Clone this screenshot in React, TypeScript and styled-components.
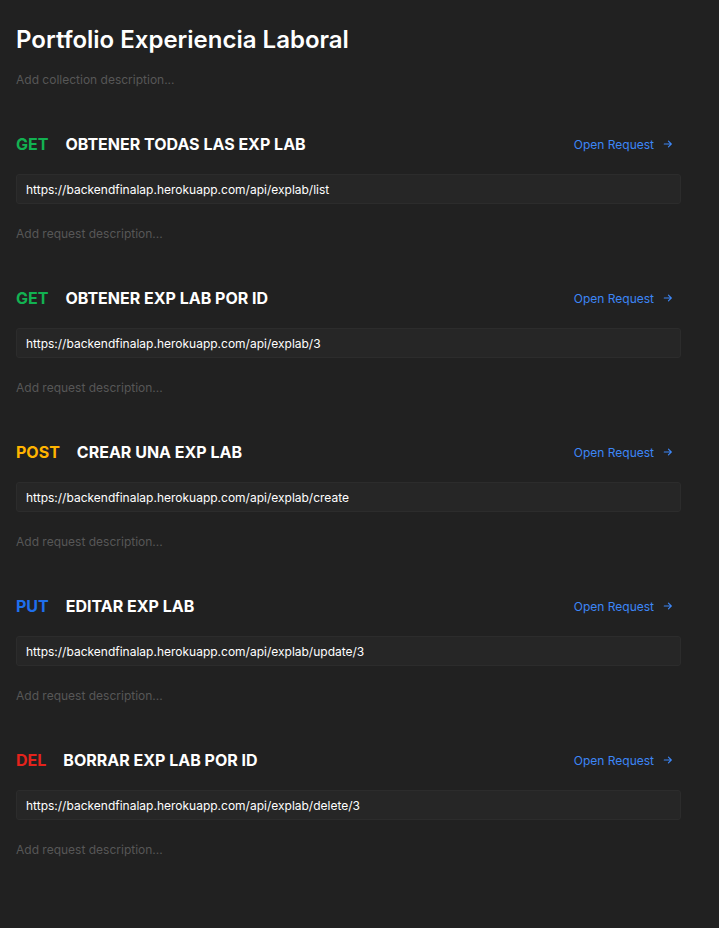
import styled, { createGlobalStyle } from 'styled-components';

type Method = 'GET' | 'POST' | 'PUT' | 'DEL';

interface Request {
  method: Method;
  name: string;
  url: string;
}

const requests: Request[] = [
  { method: 'GET', name: 'OBTENER TODAS LAS EXP LAB', url: 'https://backendfinalap.herokuapp.com/api/explab/list' },
  { method: 'GET', name: 'OBTENER EXP LAB POR ID', url: 'https://backendfinalap.herokuapp.com/api/explab/3' },
  { method: 'POST', name: 'CREAR UNA EXP LAB', url: 'https://backendfinalap.herokuapp.com/api/explab/create' },
  { method: 'PUT', name: 'EDITAR EXP LAB', url: 'https://backendfinalap.herokuapp.com/api/explab/update/3' },
  { method: 'DEL', name: 'BORRAR EXP LAB POR ID', url: 'https://backendfinalap.herokuapp.com/api/explab/delete/3' },
];

const methodColors: Record<Method, string> = {
  GET: '#12b151',
  POST: '#ffb400',
  PUT: '#1f6fec',
  DEL: '#e5231c',
};

export default function App() {
  return (
    <>
      <GlobalStyle />
      <Page>
        <Title>Portfolio Experiencia Laboral</Title>
        <Description>Add collection description...</Description>
        {requests.map((r) => (
          <Section key={r.url}>
            <Header>
              <MethodLabel method={r.method}>{r.method}</MethodLabel>
              <Name>{r.name}</Name>
              <OpenLink>
                Open Request
                <Arrow viewBox="0 0 12 12">
                  <path d="M1.5 6h8M6.5 2.5L10 6l-3.5 3.5" />
                </Arrow>
              </OpenLink>
            </Header>
            <UrlBox>{r.url}</UrlBox>
            <Description>Add request description...</Description>
          </Section>
        ))}
      </Page>
    </>
  );
}

const GlobalStyle = createGlobalStyle`
  html, body {
    margin: 0;
    background: #212121;
    font-family: Inter, "Noto Sans", "Liberation Sans", sans-serif;
  }
`;

const Page = styled.div`
  width: 697px;
  padding: 24px 16px 60px;
  min-height: 928px;
  box-sizing: border-box;
`;

const Title = styled.h1`
  margin: 0;
  font-size: 24px;
  line-height: 32px;
  font-weight: 600;
  color: #ffffff;
`;

const Description = styled.div`
  margin-top: 15px;
  font-size: 12px;
  line-height: 18px;
  color: #575757;
`;

const Section = styled.section`
  margin-top: 43px;

  ${Description} {
    margin-top: 21px;
  }
`;

const Header = styled.div`
  display: flex;
  align-items: center;
  height: 24px;
  gap: 17px;
`;

const MethodLabel = styled.span<{ method: Method }>`
  font-size: 16px;
  font-weight: 700;
  color: ${({ method }) => methodColors[method]};
`;

const Name = styled.span`
  flex: 1;
  font-size: 16px;
  font-weight: 700;
  color: #ffffff;
`;

const OpenLink = styled.a`
  display: flex;
  align-items: center;
  gap: 9px;
  padding-right: 8px;
  font-size: 12px;
  color: #3d86f6;
  cursor: pointer;
`;

const Arrow = styled.svg`
  width: 10px;
  height: 10px;
  fill: none;
  stroke: #3d86f6;
  stroke-width: 1.3;
  stroke-linecap: round;
  stroke-linejoin: round;
`;

const UrlBox = styled.div`
  margin-top: 18px;
  height: 30px;
  box-sizing: border-box;
  display: flex;
  align-items: center;
  padding: 0 9px;
  background: #262626;
  border: 1px solid #2c2c2c;
  border-radius: 3px;
  font-size: 12px;
  color: #ffffff;
`;
